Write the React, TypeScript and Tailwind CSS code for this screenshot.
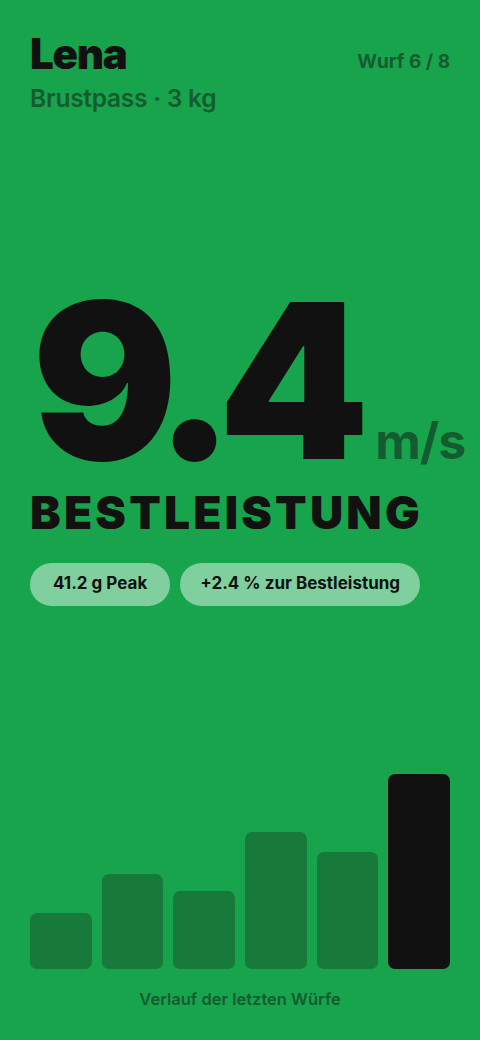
const bars = [
  { h: 56, last: false },
  { h: 95, last: false },
  { h: 78, last: false },
  { h: 137, last: false },
  { h: 117, last: false },
  { h: 195, last: true },
];

export default function App() {
  return (
    <div
      className="w-full h-[1040px] bg-[#18a44c] px-[30px] flex flex-col text-[#111111] overflow-hidden"
      style={{ fontFamily: 'Inter, "Noto Sans", sans-serif' }}
    >
      <div className="pt-[33px] flex justify-between items-start">
        <div>
          <div className="text-[42px] font-black leading-none tracking-[-0.03em]">Lena</div>
          <div className="mt-[11px] text-[24.5px] font-semibold leading-none tracking-[-0.01em] text-[#145c2f]">
            Brustpass · 3 kg
          </div>
        </div>
        <div className="mt-[19px] text-[19px] font-bold leading-none text-[#145c2f]">Wurf 6 / 8</div>
      </div>

      <div className="mt-[162px] flex items-baseline">
        <span className="text-[216px] font-black leading-none tracking-[-0.077em] ml-[2px]">9.4</span>
        <span className="ml-[22px] text-[50px] font-bold leading-none tracking-[-0.02em] text-[#145c2f]">m/s</span>
      </div>

      <div className="text-[46px] font-black leading-none tracking-[0.07em]">BESTLEISTUNG</div>

      <div className="mt-[28px] flex gap-[10px]">
        <div className="h-[43px] px-[23px] rounded-full bg-[#80cf9e] flex items-center text-[17px] font-bold">
          41.2 g Peak
        </div>
        <div className="h-[43px] px-[20px] rounded-full bg-[#80cf9e] flex items-center text-[17px] font-bold">
          +2.4 % zur Bestleistung
        </div>
      </div>

      <div className="mt-[168px] h-[195px] flex items-end gap-[10px]">
        {bars.map((b, i) => (
          <div
            key={i}
            className={b.last ? 'flex-1 rounded-[7px] bg-[#111111]' : 'flex-1 rounded-[7px] bg-[#177a3b]'}
            style={{ height: b.h }}
          />
        ))}
      </div>

      <div className="mt-[22px] text-center text-[16.5px] font-semibold leading-none text-[#145c2f]">
        Verlauf der letzten Würfe
      </div>
    </div>
  );
}
